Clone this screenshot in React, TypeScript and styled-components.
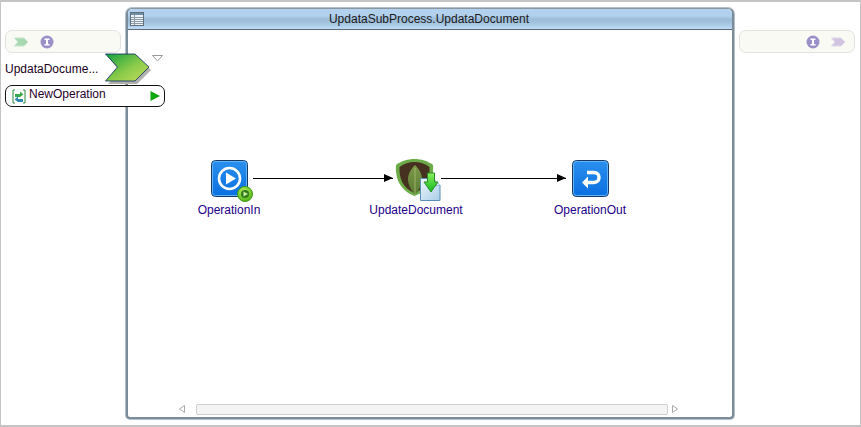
import styled, { createGlobalStyle } from "styled-components";

const GlobalStyle = createGlobalStyle`
  html, body { margin: 0; padding: 0; background: #fff; }
  #root { width: 861px; height: 427px; overflow: hidden; }
`;

const Page = styled.div`
  box-sizing: border-box;
  width: 861px;
  height: 427px;
  border: 1px solid #c4c4c4;
  border-bottom-width: 2px;
  border-top-width: 2px;
  background: #fff;
  display: flex;
  align-items: flex-start;
  padding: 6px 5px 0 4px;
  gap: 5px;
  font-family: "Liberation Sans", Arial, sans-serif;
  position: relative;
`;

const SideColumn = styled.div`
  width: 116px;
  flex: none;
  padding-top: 22px;
  position: relative;
  z-index: 2;
`;

const Palette = styled.div<{ $right?: boolean }>`
  box-sizing: border-box;
  height: 23px;
  border: 1px solid #e2e2e0;
  border-radius: 7px;
  background: #fafaf5;
  display: flex;
  align-items: center;
  justify-content: ${(p) => (p.$right ? "flex-end" : "flex-start")};
  gap: 11px;
  padding: 0 8px;
`;

const PortRow = styled.div`
  display: flex;
  align-items: center;
  height: 31px;
  width: 170px;
  font-size: 12px;
  color: #200020;
  white-space: nowrap;
`;

const PortName = styled.span`
  width: 100px;
`;

const PortChevron = styled.svg`
  flex: none;
`;

const MenuArrow = styled.svg`
  margin: -20px 0 0 -1px;
  flex: none;
`;

const OperationPill = styled.div`
  box-sizing: border-box;
  width: 160px;
  height: 22px;
  margin-top: 1px;
  border: 1px solid #111;
  border-radius: 7px;
  background: #fff;
  display: flex;
  align-items: center;
  gap: 3px;
  padding: 0 4px 0 6px;
  font-size: 12px;
  color: #28002c;
`;

const OperationLabel = styled.span`
  flex: 1;
  margin-top: -4px;
`;

const Window = styled.div`
  box-sizing: border-box;
  width: 608px;
  height: 411px;
  flex: none;
  border: 2px solid #7d8c99;
  border-top: 1px solid #8a96a0;
  border-radius: 6px 6px 4px 4px;
  box-shadow: 0 0 0 1px #b4c0ca;
  display: flex;
  flex-direction: column;
  background: #fff;
  overflow: hidden;
`;

const TitleBar = styled.div`
  height: 20px;
  flex: none;
  display: flex;
  align-items: center;
  background: linear-gradient(#b3d2ef 0%, #b1d0ec 35%, #9dbcd7 50%, #a0bfda 65%, #bcdcf7 100%);
  border-bottom: 1px solid #5f6a72;
  position: relative;
  padding-left: 2px;
`;

const TitleText = styled.div`
  flex: 1;
  text-align: center;
  font-size: 12px;
  color: #1a1a1a;
  padding-right: 18px;
`;

const Canvas = styled.div`
  flex: 1;
  position: relative;
`;

const Node = styled.div<{ $x: number; $y: number }>`
  position: absolute;
  left: ${(p) => p.$x}px;
  top: ${(p) => p.$y}px;
  width: 38px;
  height: 38px;
`;

const NodeLabel = styled.div<{ $cx: number }>`
  position: absolute;
  left: ${(p) => p.$cx}px;
  top: 173px;
  transform: translateX(-50%);
  font-size: 12px;
  color: #22008c;
  white-space: nowrap;
`;

const Wire = styled.div<{ $x: number; $w: number }>`
  position: absolute;
  left: ${(p) => p.$x}px;
  top: 148px;
  width: ${(p) => p.$w}px;
  height: 1px;
  background: #000;

  &::after {
    content: "";
    position: absolute;
    right: 0;
    top: -4px;
    border-left: 9px solid #000;
    border-top: 4.5px solid transparent;
    border-bottom: 4.5px solid transparent;
  }
`;

const ScrollRow = styled.div`
  height: 22px;
  flex: none;
  display: flex;
  align-items: flex-start;
  padding: 9px 0 0 51px;
  box-sizing: border-box;
`;

const ScrollThumb = styled.div`
  box-sizing: border-box;
  width: 472px;
  height: 11px;
  margin: 0 4px 0 11px;
  border: 1px solid #cfcfcf;
  border-radius: 2px;
  background: #f4f4f4;
`;

const ScrollArrow = styled.svg`
  flex: none;
  margin-top: 1px;
`;

const TableIcon = () => (
  <svg width="14" height="14" viewBox="0 0 14 14" style={{ display: "block" }}>
    <rect x="0.5" y="0.5" width="13" height="13" fill="#eef3f7" stroke="#5f6f7c" />
    <rect x="1" y="1" width="12" height="2" fill="#6f8da3" />
    <path d="M1 5.5H13M1 7.5H13M1 9.5H13M1 11.5H13M4.5 3V13" stroke="#8a9aa6" fill="none" />
  </svg>
);

const SmallChevron = ({ fill, stroke }: { fill: string; stroke: string }) => (
  <svg width="15" height="10" viewBox="0 0 15 10">
    <path d="M0.5 1H10L14 5L10 9H0.5L4 5Z" fill={fill} stroke={stroke} />
  </svg>
);

const InfoBadge = () => (
  <svg width="14" height="14" viewBox="0 0 14 14">
    <circle cx="7" cy="7" r="6.5" fill="#9c90c8" />
    <path d="M4.5 3.5H9.5V5H8V9H9.5V10.5H4.5V9H6V5H4.5Z" fill="#fff" />
  </svg>
);

const OperationInIcon = () => (
  <svg width="46" height="46" viewBox="0 0 46 46" style={{ overflow: "visible" }}>
    <defs>
      <linearGradient id="blueIn" x1="0" y1="0" x2="0" y2="1">
        <stop offset="0" stopColor="#2a90ee" />
        <stop offset="1" stopColor="#0a6fe0" />
      </linearGradient>
      <radialGradient id="greenBall" cx="0.4" cy="0.3" r="0.75">
        <stop offset="0" stopColor="#b6ec58" />
        <stop offset="1" stopColor="#4cb016" />
      </radialGradient>
    </defs>
    <rect x="0.5" y="0.5" width="36" height="36" rx="4" fill="url(#blueIn)" stroke="#143a66" />
    <rect x="1.5" y="1.5" width="34" height="34" rx="3" fill="none" stroke="#62b4f6" />
    <circle cx="18.5" cy="18.5" r="10.5" fill="none" stroke="#fff" strokeWidth="2.6" />
    <path d="M15 12.5L25 18.5L15 24.5Z" fill="#fff" />
    <circle cx="34" cy="34" r="7.5" fill="url(#greenBall)" stroke="#3f9a14" />
    <circle cx="34" cy="34" r="4" fill="#2f7a1a" />
    <path d="M32.5 31.5L37 34L32.5 36.5Z" fill="#c8f0a0" />
  </svg>
);

const UpdateDocumentIcon = () => (
  <svg width="48" height="46" viewBox="0 0 48 46" style={{ overflow: "visible" }}>
    <defs>
      <linearGradient id="leaf" x1="0" y1="0" x2="0" y2="1">
        <stop offset="0" stopColor="#7c9a48" />
        <stop offset="1" stopColor="#5a7a34" />
      </linearGradient>
      <linearGradient id="paper" x1="0" y1="0" x2="1" y2="1">
        <stop offset="0" stopColor="#eef6fc" />
        <stop offset="1" stopColor="#a9cde8" />
      </linearGradient>
      <linearGradient id="downArrow" x1="0" y1="0" x2="0" y2="1">
        <stop offset="0" stopColor="#8cf05a" />
        <stop offset="1" stopColor="#12b81e" />
      </linearGradient>
    </defs>
    <path d="M0 6C5 2 12 0 18.5 0C25 0 32 2 37 6C38 18 34 31 18.5 37C3 31 -1 18 0 6Z" fill="#6cab48" />
    <path d="M3.5 8C8 4.5 13 3 18.5 3C24 3 29 4.5 33.5 8C34 18 31 29 18.5 34C6 29 3 18 3.5 8Z" fill="#46301f" />
    <path d="M19 6C25 12 27 18 25.5 24C24.5 29 21 33 19 36C17 33 13.5 29 12.5 24C11 18 13 12 19 6Z" fill="url(#leaf)" />
    <path d="M19 9V36" stroke="#a9c078" strokeWidth="0.8" fill="none" />
    <path d="M24.5 19.5H37L44 26.5V41.5H24.5Z" fill="url(#paper)" stroke="#5d8fb5" />
    <path d="M37 19.5V26.5H44" fill="#dcecf8" stroke="#8fb4d0" />
    <path d="M31.5 14H38.5V23H42L35 33L28 23H31.5Z" fill="url(#downArrow)" stroke="#2a8a2a" />
  </svg>
);

const OperationOutIcon = () => (
  <svg width="38" height="38" viewBox="0 0 38 38">
    <defs>
      <linearGradient id="blueOut" x1="0" y1="0" x2="0" y2="1">
        <stop offset="0" stopColor="#2a90ee" />
        <stop offset="1" stopColor="#0a6fe0" />
      </linearGradient>
    </defs>
    <rect x="0.5" y="0.5" width="36" height="36" rx="4" fill="url(#blueOut)" stroke="#143a66" />
    <rect x="1.5" y="1.5" width="34" height="34" rx="3" fill="none" stroke="#62b4f6" />
    <path
      d="M15 12.5H22C25.5 12.5 27 15 27 17.5C27 20 25.5 22.5 22 22.5H15"
      fill="none"
      stroke="#fff"
      strokeWidth="3.4"
    />
    <path d="M16 16.5V28.5L10 22.5Z" fill="#fff" />
  </svg>
);

const LargeChevron = () => (
  <PortChevron width="48" height="33" viewBox="0 0 48 33">
    <defs>
      <linearGradient id="chev" x1="0" y1="0" x2="1" y2="1">
        <stop offset="0" stopColor="#12a040" />
        <stop offset="0.55" stopColor="#8ccb4a" />
        <stop offset="1" stopColor="#c6dc5c" />
      </linearGradient>
    </defs>
    <path d="M3 5H32L46 18L32 32H3L15 19Z" fill="#b0b0b0" />
    <path d="M0.5 2H30L44 15L30 29H0.5L12.5 15Z" fill="url(#chev)" stroke="#0c2860" strokeWidth="0.8" />
  </PortChevron>
);

const wires = [
  { x: 125, w: 140 },
  { x: 313, w: 125 },
];

const labels = [
  { cx: 101, text: "OperationIn" },
  { cx: 288, text: "UpdateDocument" },
  { cx: 462, text: "OperationOut" },
];

export default function App() {
  return (
    <Page>
      <GlobalStyle />
      <SideColumn>
        <Palette>
          <SmallChevron fill="#a8d8b0" stroke="#c8e4cc" />
          <InfoBadge />
        </Palette>
        <PortRow>
          <PortName>UpdataDocume...</PortName>
          <LargeChevron />
          <MenuArrow width="11" height="7" viewBox="0 0 11 7">
            <path d="M0.5 0.5H10.5L5.5 6Z" fill="#fff" stroke="#999" />
          </MenuArrow>
        </PortRow>
        <OperationPill>
          <svg width="14" height="15" viewBox="0 0 14 15">
            <path d="M3 1H1V14H3M11 1H13V14H11" fill="none" stroke="#2a8a3a" />
            <path d="M3 5H8V2.5L11.5 5.5L8 8H3Z" fill="#3aa84a" />
            <path d="M11 10H6V7.5L2.5 10.5L6 13H11Z" fill="#2f8ab0" />
          </svg>
          <OperationLabel>NewOperation</OperationLabel>
          <svg width="10" height="10" viewBox="0 0 10 10">
            <path d="M0.5 0L10 5L0.5 10Z" fill="#0ea80e" />
          </svg>
        </OperationPill>
      </SideColumn>

      <Window>
        <TitleBar>
          <TableIcon />
          <TitleText>UpdataSubProcess.UpdataDocument</TitleText>
        </TitleBar>
        <Canvas>
          {wires.map((wire) => (
            <Wire key={wire.x} $x={wire.x} $w={wire.w} />
          ))}
          <Node $x={83} $y={130}>
            <OperationInIcon />
          </Node>
          <Node $x={268} $y={129}>
            <UpdateDocumentIcon />
          </Node>
          <Node $x={444} $y={130}>
            <OperationOutIcon />
          </Node>
          {labels.map((label) => (
            <NodeLabel key={label.text} $cx={label.cx}>
              {label.text}
            </NodeLabel>
          ))}
        </Canvas>
        <ScrollRow>
          <ScrollArrow width="6" height="8" viewBox="0 0 6 8">
            <path d="M5.5 0.5V7.5L0.5 4Z" fill="#fff" stroke="#aaa" />
          </ScrollArrow>
          <ScrollThumb />
          <ScrollArrow width="6" height="8" viewBox="0 0 6 8">
            <path d="M0.5 0.5V7.5L5.5 4Z" fill="#fff" stroke="#aaa" />
          </ScrollArrow>
        </ScrollRow>
      </Window>

      <SideColumn>
        <Palette $right>
          <InfoBadge />
          <SmallChevron fill="#d0c4e0" stroke="#e0d8ea" />
        </Palette>
      </SideColumn>
    </Page>
  );
}
